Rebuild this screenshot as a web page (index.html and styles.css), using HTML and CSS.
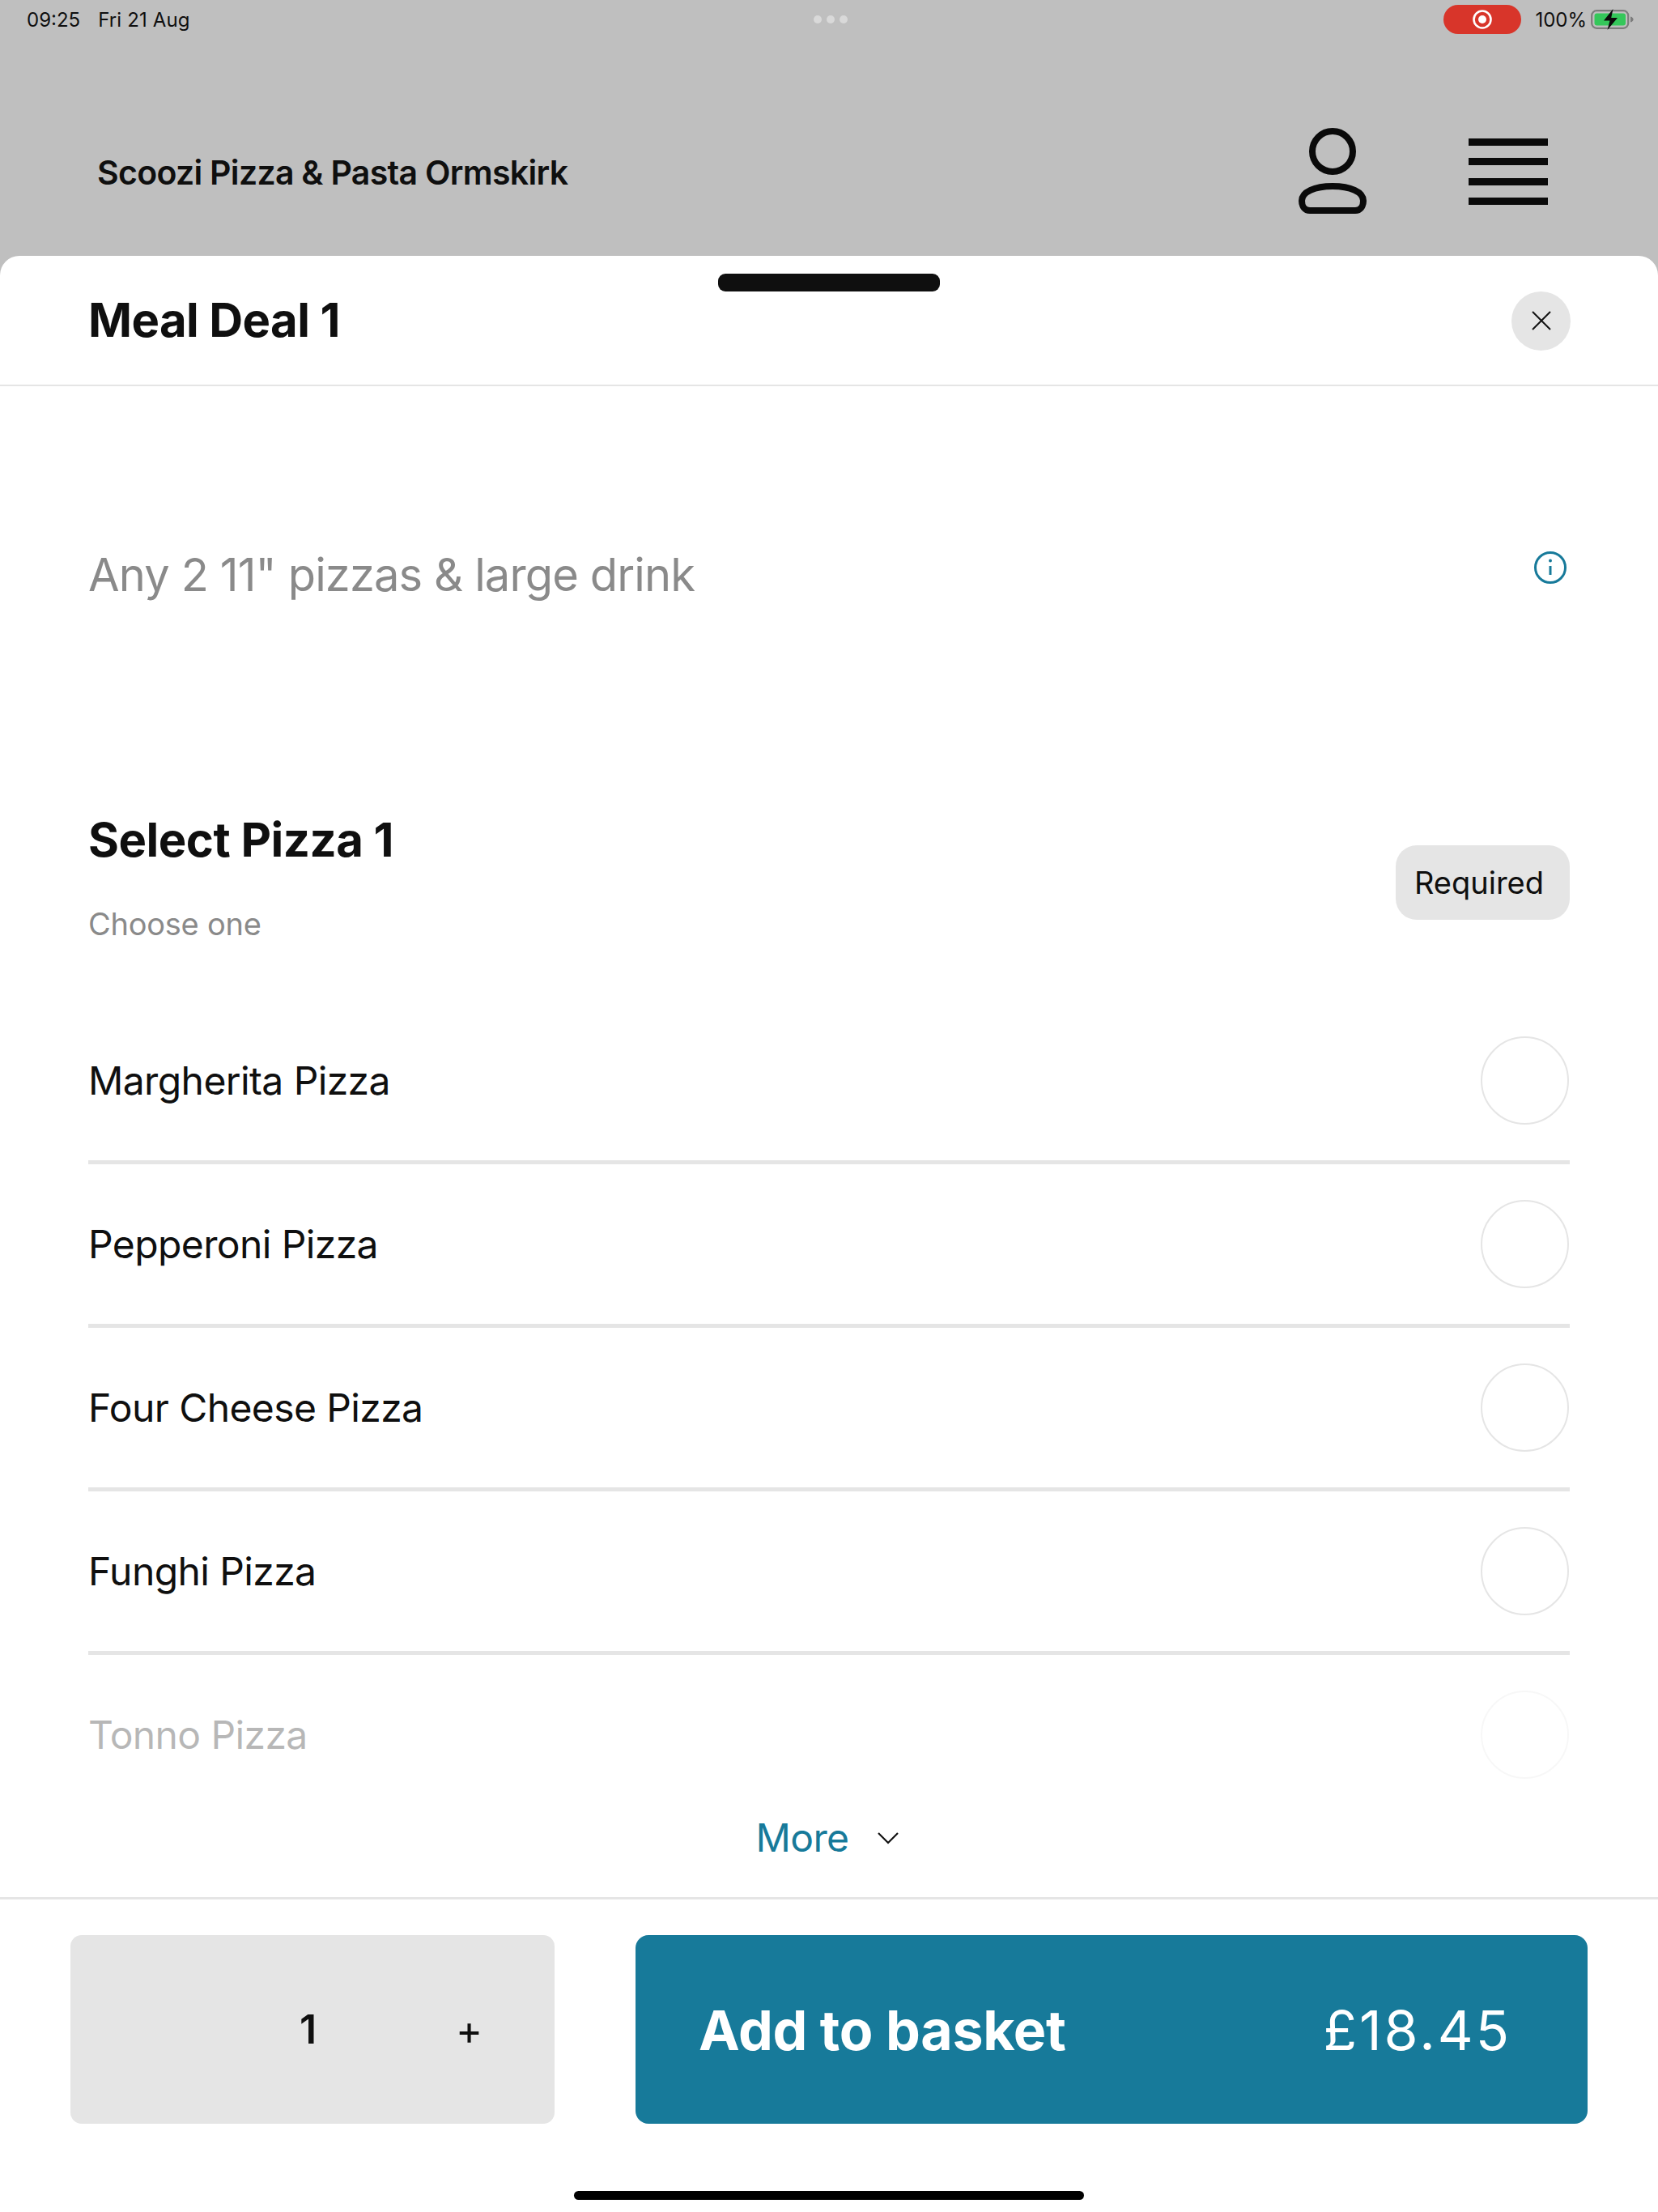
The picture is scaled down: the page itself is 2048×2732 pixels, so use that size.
FILE: index.html
```html
<!DOCTYPE html>
<html lang="en">
<head>
<meta charset="utf-8">
<title>Meal Deal 1</title>
<link rel="stylesheet" href="styles.css">
</head>
<body>
<div class="app">
  <div class="status">
    <div class="status-left"><span>09:25</span><span>Fri 21 Aug</span></div>
    <div class="status-dots"><i></i><i></i><i></i></div>
    <div class="status-right">
      <div class="rec">
        <svg width="24" height="24" viewBox="0 0 24 24"><circle cx="12" cy="12" r="10.5" fill="none" stroke="#fff" stroke-width="2.6"/><circle cx="12" cy="12" r="5" fill="#fff"/></svg>
      </div>
      <span class="pct">100%</span>
      <svg class="batt" width="54" height="26" viewBox="0 0 54 26">
        <rect x="1.2" y="2.2" width="45" height="21.6" rx="6" fill="none" stroke="#7c7c7c" stroke-width="2.2"/>
        <rect x="4.5" y="5.5" width="38.5" height="15" rx="3" fill="#34c75a"/>
        <path d="M49 9.5c2.4.6 3.6 2 3.600 3.500s-1.200 2.900-3.600 3.500z" fill="#7c7c7c"/>
        <path d="M27.500 0 16 14.500h7.500L20.500 26 33 11h-7.800z" fill="#0a0a0a"/>
      </svg>
    </div>
  </div>
  <header class="topbar">
    <div class="brand">Scoozi Pizza &amp; Pasta Ormskirk</div>
    <div class="top-icons">
      <svg class="user" width="84" height="106" viewBox="0 0 84 106" fill="none" stroke="#0a0a0a" stroke-width="8">
        <circle cx="42" cy="29" r="25"/>
        <path d="M4 90C4 79 20 72 42 72s38 7 38 18c0 7-4 12-10 12H14C8 102 4 97 4 90z"/>
      </svg>
      <div class="burger"><i></i><i></i><i></i><i></i></div>
    </div>
  </header>
  <main class="sheet">
    <div class="grab"></div>
    <div class="sheet-head">
      <h1>Meal Deal 1</h1>
      <button class="close" type="button" aria-label="Close">
        <svg width="26" height="26" viewBox="0 0 26 26" fill="none" stroke="#111" stroke-width="2"><path d="M2 2l22 22M24 2L2 24"/></svg>
      </button>
    </div>
    <div class="body">
      <div class="desc">
        <p>Any 2 11" pizzas &amp; large drink</p>
        <svg class="info" width="42" height="42" viewBox="0 0 42 42" fill="none" stroke="#177a9a" stroke-width="3"><circle cx="21" cy="21" r="18.500"/><path d="M21 19v11"/><circle cx="21" cy="12.500" r="2" fill="#177a9a" stroke="none"/></svg>
      </div>
      <div class="group-head">
        <div>
          <h2>Select Pizza 1</h2>
          <p>Choose one</p>
        </div>
        <span class="req">Required</span>
      </div>
      <div class="list">
        <div class="row"><span>Margherita Pizza</span><i class="radio"></i></div>
        <div class="row"><span>Pepperoni Pizza</span><i class="radio"></i></div>
        <div class="row"><span>Four Cheese Pizza</span><i class="radio"></i></div>
        <div class="row"><span>Funghi Pizza</span><i class="radio"></i></div>
        <div class="row last"><span>Tonno Pizza</span><i class="radio"></i></div>
        <div class="fade"></div>
      </div>
      <div class="more">
        <span>More</span>
        <svg width="28" height="16" viewBox="0 0 28 16" fill="none" stroke="#111" stroke-width="2.200"><path d="M2 2l12 12L26 2"/></svg>
      </div>
    </div>
    <footer class="foot">
      <div class="qty"><span class="num">1</span><span class="plus">+</span></div>
      <button class="add" type="button"><b>Add to basket</b><span>£18.45</span></button>
    </footer>
    <div class="home-wrap"><div class="home"></div></div>
  </main>
</div>
</body>
</html>
```
FILE: styles.css
```css
* { box-sizing: border-box; }
html, body { margin: 0; padding: 0; }
body { font-family: Inter, "Liberation Sans", sans-serif; color: #0f0f0f; background: #bfbfbf; }
.app { width: 2048px; height: 2732px; display: flex; flex-direction: column; overflow: hidden; background: #bfbfbf; }

.status { height: 48px; display: grid; grid-template-columns: 1fr auto 1fr; align-items: center; padding: 0 29px 0 33px; font-size: 24px; }
.status-left { display: flex; gap: 22px; }
.status-left span:last-child { letter-spacing: 0.15px; }
.status-dots { display: flex; gap: 6px; }
.status-dots i { width: 10px; height: 10px; border-radius: 50%; background: #d9d9d9; }
.status-right { display: flex; align-items: center; justify-content: flex-end; }
.rec { width: 96px; height: 36px; border-radius: 18px; background: #d8352a; display: flex; align-items: center; justify-content: center; }
.pct { margin-left: 17px; margin-right: 5px; }
.batt { display: block; }

.topbar { height: 268px; padding: 62px 136px 0 120px; display: flex; align-items: center; justify-content: space-between; }
.brand { font-size: 41px; font-weight: 600; letter-spacing: -0.7px; }
.top-icons { display: flex; align-items: center; gap: 126px; margin-top: -4px; }
.user { display: block; }
.burger { width: 98px; height: 82px; margin-top: 2px; display: flex; flex-direction: column; justify-content: space-between; }
.burger i { display: block; height: 9px; background: #0a0a0a; }

.sheet { flex: 1; position: relative; background: #fff; border-radius: 24px 24px 0 0; display: flex; flex-direction: column; min-height: 0; }
.grab { position: absolute; left: 887px; top: 22px; width: 274px; height: 22px; border-radius: 9px; background: #0f0f0f; }
.sheet-head { height: 161px; padding: 0 108px 2px 109px; display: flex; align-items: center; justify-content: space-between; border-bottom: 2px solid #e5e5e5; flex: none; }
h1 { margin: 0; font-size: 58px; font-weight: 700; letter-spacing: -0.6px; }
.close { width: 73px; height: 73px; margin-top: 3px; padding: 0; border: 0; border-radius: 50%; background: #e5e5e5; display: flex; align-items: center; justify-content: center; }

.body { flex: 1; display: flex; flex-direction: column; padding: 0 109px; min-height: 0; }
.desc { height: 525px; padding: 201px 3px 0 0; display: flex; justify-content: space-between; align-items: flex-start; flex: none; }
.desc p { margin: 0; font-size: 56px; line-height: 64px; color: #8a8a8a; letter-spacing: -0.87px; }
.info { display: block; margin-top: 2px; }
.group-head { height: 234px; display: flex; justify-content: space-between; align-items: flex-start; flex: none; }
h2 { margin: 0; font-size: 58px; line-height: 70px; font-weight: 700; letter-spacing: -0.5px; }
.group-head p { margin: 44px 0 0; font-size: 38px; line-height: 50px; color: #8a8a8a; letter-spacing: -0.25px; }
.req { margin-top: 42px; height: 92px; padding: 0 32px 0 23px; border-radius: 26px; background: #e5e5e5; font-size: 38px; display: flex; align-items: center; }

.list { position: relative; flex: none; }
.row { height: 202px; display: flex; align-items: center; justify-content: space-between; border-bottom: 5px solid #e5e5e5; font-size: 48px; letter-spacing: -0.6px; }
.row.last { border-bottom: 0; padding-bottom: 5px; }
.radio { display: block; width: 109px; height: 109px; margin-right: 1px; border-radius: 50%; border: 2px solid #e5e5e5; }
.fade { position: absolute; left: -4px; right: -4px; bottom: 0; height: 202px; background: rgba(255,255,255,.7); }

.more { flex: none; height: 100px; padding: 0 4px 50px 0; margin: 0 -109px; display: flex; align-items: center; justify-content: center; gap: 34px; font-size: 48px; letter-spacing: -0.6px; color: #177a9a; border-bottom: 3px solid #e5e5e5; }

.foot { flex: none; height: 277px; padding: 44px 87px 0 87px; display: flex; align-items: flex-start; justify-content: space-between; }
.qty { width: 598px; height: 233px; border-radius: 14px; background: #e5e5e5; display: flex; align-items: center; padding-left: 283px; }
.num { font-size: 50px; font-weight: 600; width: 193px; margin-bottom: 2px; }
.plus { font-size: 50px; }
.add { width: 1176px; height: 233px; padding: 0 94px 0 78px; border: 0; border-radius: 16px; background: #177a9a; color: #fff; display: flex; align-items: center; justify-content: space-between; font-family: inherit; }
.add b { font-size: 68px; font-weight: 700; letter-spacing: -0.3px; }
.add span { font-size: 68px; font-weight: 400; letter-spacing: 3px; }

.home-wrap { flex: none; height: 109px; display: flex; justify-content: center; align-items: flex-end; padding-bottom: 15px; }
.home { width: 630px; height: 11px; border-radius: 6px; background: #000; }
```
